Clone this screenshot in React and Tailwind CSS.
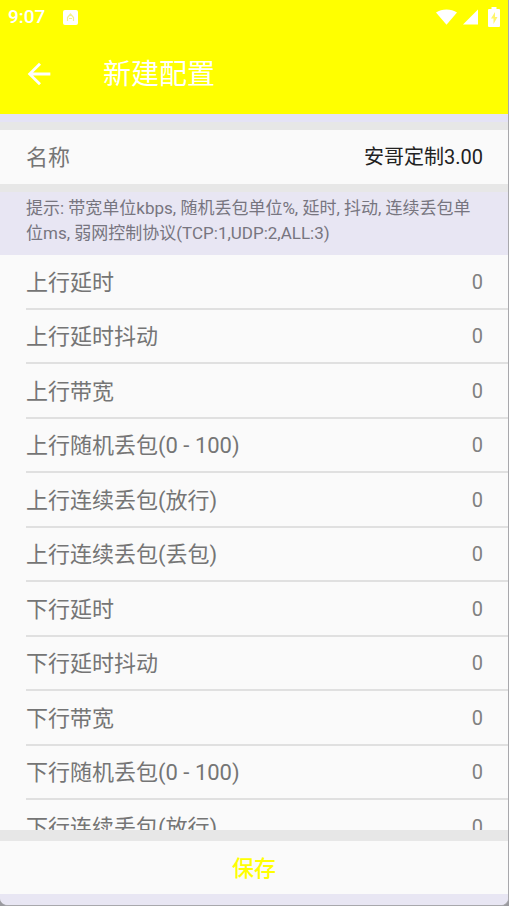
import { useState } from "react";
import { MdArrowBack } from "react-icons/md";

const FIELDS = [
  "上行延时",
  "上行延时抖动",
  "上行带宽",
  "上行随机丢包(0 - 100)",
  "上行连续丢包(放行)",
  "上行连续丢包(丢包)",
  "下行延时",
  "下行延时抖动",
  "下行带宽",
  "下行随机丢包(0 - 100)",
  "下行连续丢包(放行)",
];

function StatusBar() {
  return (
    <div className="flex h-[34px] items-center justify-between pl-2 pr-2 text-white">
      <div className="flex items-center gap-[18px]">
        <span className="text-[19px] leading-[34px] font-medium">9:07</span>
        <svg className="h-[15px] w-[15px]" viewBox="0 0 15 15" aria-hidden="true">
          <rect width="15" height="15" rx="2" fill="currentColor" />
          <path d="M4.5 11V7.5L7.5 4l3 3.5V11M6 8.5h3" fill="none" stroke="#f5f08a" strokeWidth="1.2" />
        </svg>
      </div>
      <div className="flex items-center">
        <svg className="h-[16px] w-[21px]" viewBox="0 0 22 16" fill="currentColor" aria-hidden="true">
          <path d="M0 3.4C6-1 16-1 22 3.4L11 16z" />
        </svg>
        <svg className="ml-[6px] h-[16px] w-[15px]" viewBox="0 0 16 16" fill="currentColor" aria-hidden="true">
          <path d="M16 0v16H0z" />
        </svg>
        <svg className="ml-[10px] h-[20px] w-[12px]" viewBox="0 0 12 20" aria-hidden="true">
          <path d="M3.5 0h5v2H11a1 1 0 0 1 1 1v16a1 1 0 0 1-1 1H1a1 1 0 0 1-1-1V3a1 1 0 0 1 1-1h2.5z" fill="currentColor" />
          <path d="M7 5l-4 6.5h2.5V17l4-7H7z" fill="#fff56b" />
        </svg>
      </div>
    </div>
  );
}

function Field({ id, label, value, onChange, strong }) {
  return (
    <div className="flex h-full items-center justify-between pr-[25px]">
      <label htmlFor={id} className="shrink-0 pt-[2px] text-[22px] leading-[32px] font-normal text-[#757575]">
        {label}
      </label>
      <input
        id={id}
        value={value}
        onChange={(e) => onChange(e.target.value)}
        className={
          strong
            ? "w-0 min-w-0 grow bg-transparent text-right text-[20px] leading-[28px] text-[#222222] outline-none"
            : "w-0 min-w-0 grow bg-transparent text-right text-[20px] leading-[28px] text-[#808080] outline-none"
        }
      />
    </div>
  );
}

export default function App() {
  const [name, setName] = useState("安哥定制3.00");
  const [values, setValues] = useState(FIELDS.map(() => "0"));

  return (
    <div className="h-screen bg-[#9a9a9f] font-[Roboto,'Noto_Sans_CJK_SC',sans-serif]">
      <div className="flex h-full flex-col overflow-hidden rounded-b-lg border-r border-b border-[#a8a8ac] bg-[#e8e6f3]">
        <header className="shrink-0 bg-[#ffff00]">
          <StatusBar />
          <div className="flex h-[80px] items-center gap-[47px] pl-[22px] text-white">
            <button type="button" aria-label="返回">
              <MdArrowBack size={34} />
            </button>
            <h1 className="pt-[2px] text-[28px] leading-[40px] font-normal">新建配置</h1>
          </div>
        </header>

        <main className="flex min-h-0 grow flex-col">
          <div className="min-h-0 grow overflow-hidden bg-[#fafafa]">
            <div className="h-4 border-b-8 border-[#e7e7e7] bg-[#e5e3f6]" />
            <div className="h-[54px] pl-[26px]">
              <Field id="name" label="名称" value={name} onChange={setName} strong />
            </div>
            <p className="border-t-8 border-[#e7e7e7] bg-[#e8e6f3] pt-1 pr-[25px] pb-[9px] pl-[26px] text-[17px] leading-[25px] font-normal text-[#77757f]">
              提示: 带宽单位kbps, 随机丢包单位%, 延时, 抖动, 连续丢包单位ms, 弱网控制协议(TCP:1,UDP:2,ALL:3)
            </p>
            <ul className="pl-[26px]">
              {FIELDS.map((label, i) => (
                <li key={label} className="h-[55px] border-b-2 border-[#e0e0e0] even:h-[54px]">
                  <Field
                    id={`field-${i}`}
                    label={label}
                    value={values[i]}
                    onChange={(v) => setValues(values.map((old, j) => (j === i ? v : old)))}
                  />
                </li>
              ))}
            </ul>
          </div>
          <div className="shrink-0 border-t-[11px] border-b-[11px] border-t-[#e7e7e7] border-b-[#e8e6f3]">
            <button type="button" className="h-[53px] w-full bg-[#fafafa] pt-[2px] text-[22px] leading-[32px] font-medium text-[#ffff00]">
              保存
            </button>
          </div>
        </main>
      </div>
    </div>
  );
}
